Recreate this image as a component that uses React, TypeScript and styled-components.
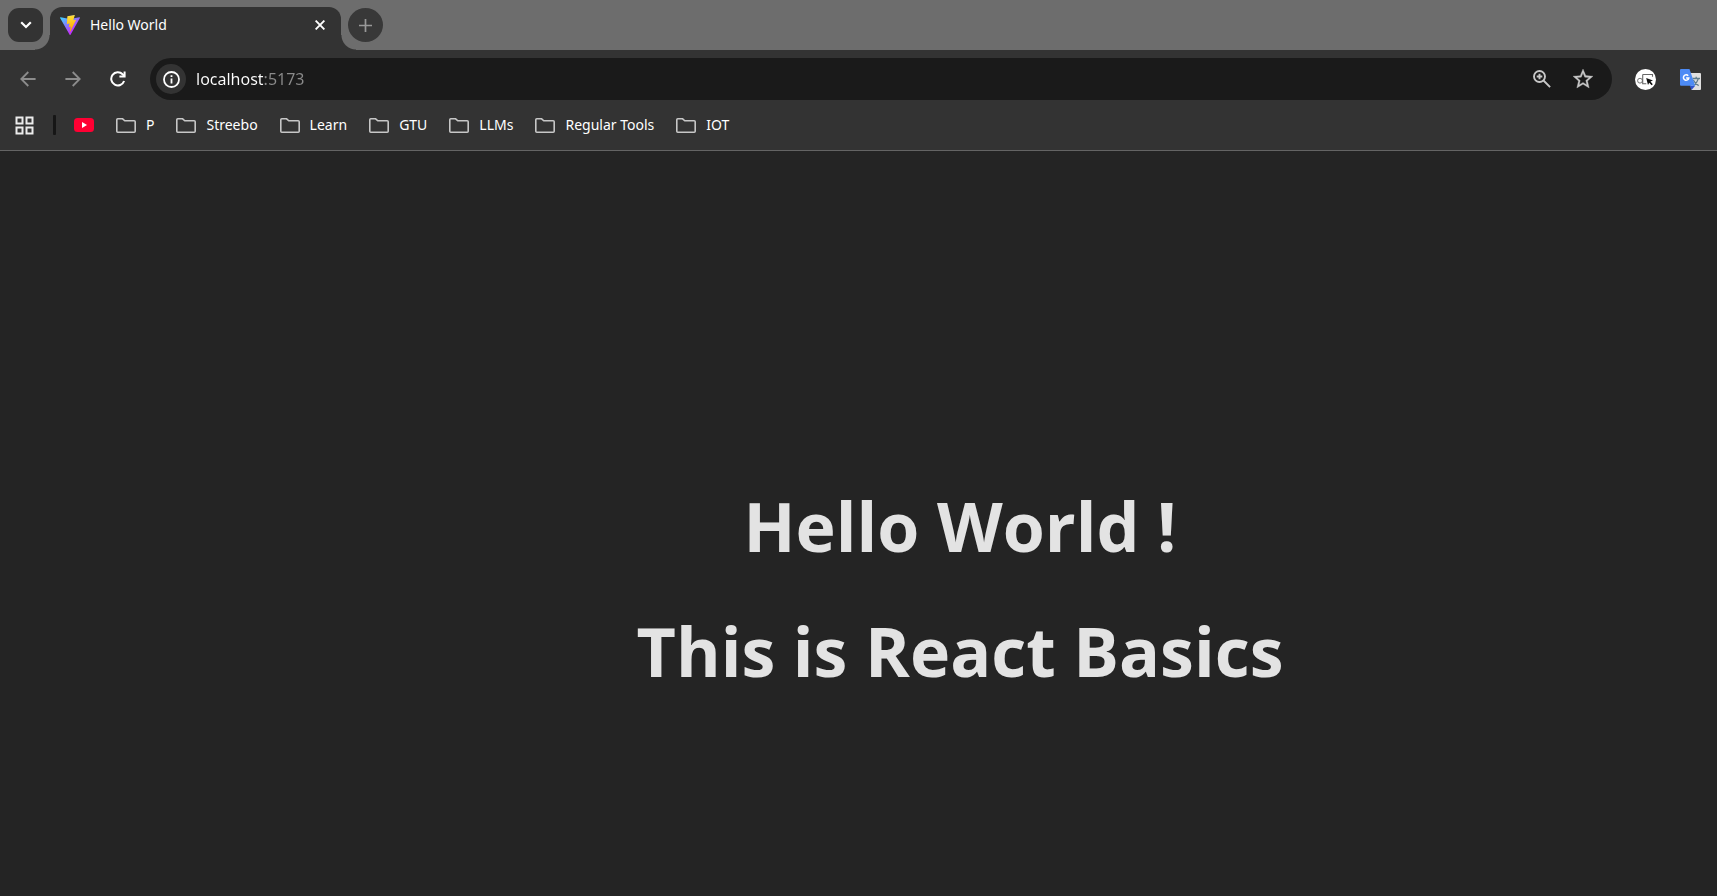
import React, { useState } from "react";
import styled, { createGlobalStyle } from "styled-components";

const uiFont = `"Segoe UI", "Noto Sans", "Open Sans", sans-serif`;

const GlobalStyle = createGlobalStyle`
  * { box-sizing: border-box; }
  body { margin: 0; background: #242424; font-family: ${uiFont}; }
  button { border: 0; padding: 0; background: none; color: inherit; font: inherit; cursor: pointer; }
  svg { display: block; flex: none; }
`;

const Browser = styled.div`
  display: flex;
  flex-direction: column;
  min-height: 100vh;
  background: #242424;
`;

const TabStrip = styled.div`
  display: flex;
  align-items: center;
  gap: 7px;
  height: 50px;
  padding: 0 8px;
  background: #6d6d6d;
`;

const StripButton = styled.button<{ $round?: boolean }>`
  display: grid;
  place-items: center;
  flex: none;
  width: 35px;
  height: 34px;
  border-radius: ${(p) => (p.$round ? "50%" : "11px")};
  background: ${(p) => (p.$round ? "#383838" : "#333333")};
`;

const Tab = styled.div`
  position: relative;
  display: flex;
  align-items: center;
  align-self: flex-end;
  gap: 10px;
  width: 291px;
  height: 43px;
  padding: 0 13px 7px 10px;
  border-radius: 12px 12px 0 0;
  background: #333333;
  color: #ffffff;
  font-size: 14px;
  line-height: 20px;

  &::before,
  &::after {
    content: "";
    position: absolute;
    bottom: 0;
    width: 15px;
    height: 15px;
  }
  &::before {
    right: 100%;
    background: radial-gradient(circle at 0 0, transparent 14px, #333333 15px);
  }
  &::after {
    left: 100%;
    background: radial-gradient(circle at 100% 0, transparent 14px, #333333 15px);
  }
`;

const TabTitle = styled.span`
  flex: 1;
`;

const CloseButton = styled.button`
  display: grid;
  place-items: center;
  width: 16px;
  height: 16px;
`;

const Toolbar = styled.div`
  display: flex;
  align-items: center;
  height: 58px;
  padding: 0 12px 0 13px;
  background: #333333;
`;

const NavButtons = styled.div`
  display: flex;
  gap: 16px;
  margin-right: 18px;
`;

const IconButton = styled.button`
  display: grid;
  place-items: center;
  flex: none;
  width: 29px;
  height: 30px;
`;

const AddressBar = styled.form`
  display: flex;
  flex: 1;
  align-items: center;
  height: 42px;
  padding: 0 15px 0 6px;
  border-radius: 21px;
  background: #1a1a1a;
`;

const SiteInfo = styled(IconButton)`
  width: 30px;
  border-radius: 50%;
  background: #333333;
`;

const AddressInput = styled.input`
  flex: 1;
  min-width: 0;
  height: 30px;
  margin-left: 10px;
  padding: 0;
  border: 0;
  outline: 0;
  background: linear-gradient(to right, #ffffff 67px, #8b8b8b 67px);
  background-clip: text;
  -webkit-background-clip: text;
  color: transparent;
  font-family: ${uiFont};
  font-size: 16px;
`;

const AddressActions = styled.div`
  display: flex;
  gap: 12px;
`;

const Extensions = styled.div`
  display: flex;
  gap: 16px;
  margin-left: 19px;
`;

const BookmarkBar = styled.nav`
  display: flex;
  align-items: center;
  height: 43px;
  padding: 0 15px 8px;
  border-bottom: 1px solid #646464;
  background: #333333;
  color: #ffffff;
  font-size: 14px;
  line-height: 20px;
`;

const AppsButton = styled.button`
  display: grid;
  place-items: center;
`;

const Separator = styled.span`
  width: 3px;
  height: 20px;
  margin: 0 18px 0 19px;
  border-radius: 1px;
  background: #161616;
`;

const Bookmarks = styled.div`
  display: flex;
  align-items: center;
  gap: 22px;
`;

const Bookmark = styled.a`
  display: flex;
  align-items: center;
  gap: 10px;
  color: inherit;
  text-decoration: none;
  white-space: nowrap;
`;

const Page = styled.main`
  display: flex;
  flex: 1;
  flex-direction: column;
  align-items: center;
  justify-content: center;
  gap: 45px;
  padding: 129px 0 0 203px;
`;

const Heading = styled.h1`
  margin: 0;
  color: #e3e3e3;
  font-family: "Segoe UI", "Open Sans", "Noto Sans", sans-serif;
  font-size: 68px;
  font-weight: 700;
  line-height: 80px;
`;

const ViteLogo = () => (
  <svg width="20" height="20" viewBox="0 0 256 257">
    <defs>
      <linearGradient id="vite-body" x1="-.8%" x2="57.6%" y1="7.7%" y2="78.4%">
        <stop offset="0%" stopColor="#41D1FF" />
        <stop offset="100%" stopColor="#BD34FE" />
      </linearGradient>
      <linearGradient id="vite-bolt" x1="43.4%" x2="50.3%" y1="2.2%" y2="89%">
        <stop offset="0%" stopColor="#FFEA83" />
        <stop offset="8.3%" stopColor="#FFDD35" />
        <stop offset="100%" stopColor="#FFA800" />
      </linearGradient>
    </defs>
    <path fill="url(#vite-body)" d="M255.153 37.938L134.897 252.976c-2.483 4.44-8.862 4.466-11.382.048L.875 37.958c-2.746-4.814 1.371-10.646 6.827-9.67l120.385 21.517a6.537 6.537 0 0 0 2.322-.004l117.867-21.483c5.438-.991 9.574 4.796 6.877 9.62Z" />
    <path fill="url(#vite-bolt)" d="M185.432.063L96.44 17.501a3.268 3.268 0 0 0-2.634 3.014l-5.474 92.456a3.268 3.268 0 0 0 3.997 3.378l24.777-5.718c2.318-.535 4.413 1.507 3.936 3.838l-7.361 36.047c-.495 2.426 1.782 4.5 4.151 3.78l15.304-4.649c2.372-.72 4.652 1.36 4.15 3.788l-11.698 56.621c-.732 3.542 3.979 5.473 5.943 2.437l1.313-2.028l72.516-144.72c1.215-2.423-.88-5.186-3.54-4.672l-25.505 4.922c-2.396.462-4.435-1.77-3.759-4.114l16.646-57.705c.677-2.35-1.37-4.583-3.769-4.113Z" />
  </svg>
);

const ChevronIcon = () => (
  <svg width="12" height="8" viewBox="0 0 12 8" fill="none" stroke="#fff" strokeWidth="2.2">
    <path d="M1.2 1.2 6 6l4.8-4.8" />
  </svg>
);

const CloseIcon = () => (
  <svg width="10" height="10" viewBox="0 0 10 10" stroke="#fff" strokeWidth="1.9">
    <path d="m.6.6 8.8 8.8M9.4.6.6 9.4" />
  </svg>
);

const PlusIcon = () => (
  <svg width="13" height="13" viewBox="0 0 13 13" stroke="#999" strokeWidth="1.7">
    <path d="M6.5 0v13M0 6.5h13" />
  </svg>
);

const ArrowIcon = ({ forward = false }: { forward?: boolean }) => (
  <svg width="16" height="16" viewBox="0 0 16 16" fill="none" stroke="#8c8c8c" strokeWidth="1.8">
    <path d={forward ? "M.4 8h14M7.7 1 14.7 8l-7 7" : "M15.6 8h-14M8.3 1 1.3 8l7 7"} />
  </svg>
);

const ReloadIcon = () => (
  <svg width="16" height="16" viewBox="0 0 16 16" fill="none" stroke="#fff" strokeWidth="2">
    <path d="M14.1 10A6.6 6.6 0 1 1 12.6 3.3L14.5 5.3" />
    <path d="M14.6.6v5H9.4" />
  </svg>
);

const InfoIcon = () => (
  <svg width="17" height="17" viewBox="0 0 17 17" fill="none" stroke="#fff" strokeWidth="1.8">
    <circle cx="8.5" cy="8.5" r="7.5" />
    <path d="M8.5 7.6v5M8.5 4.2v1.9" />
  </svg>
);

const ZoomIcon = () => (
  <svg width="18" height="18" viewBox="0 0 18 18" fill="none" stroke="#c7c7c7" strokeWidth="1.9">
    <circle cx="6.5" cy="6.5" r="5.5" />
    <path d="m10.5 10.5 6.6 6.6M6.5 3.7v5.6M3.7 6.5h5.6" />
  </svg>
);

const StarIcon = () => (
  <svg width="20" height="20" viewBox="2 2 20 20" fill="#c7c7c7" stroke="#c7c7c7" strokeWidth=".3">
    <path d="m22 9.24-7.19-.62L12 2 9.19 8.63 2 9.24l5.46 4.73L5.82 21 12 17.27 18.18 21l-1.63-7.03L22 9.24zM12 15.4l-3.76 2.27 1-4.28-3.32-2.88 4.38-.38L12 6.1l1.71 4.04 4.38.38-3.32 2.88 1 4.28L12 15.4z" />
  </svg>
);

const CaptureIcon = () => (
  <svg width="21" height="21" viewBox="0 0 21 21" fill="none">
    <circle cx="10.5" cy="10.5" r="10.5" fill="#fff" />
    <circle cx="5" cy="11.7" r="2.4" stroke="#777" strokeWidth="1" />
    <path d="M7.7 5.5v9.3h3.6M7.7 5.5h9.8v2.2" stroke="#666" strokeWidth="1.1" />
    <path d="m11.2 8.9 6.8 2.6-2.5 1.1 2.3 2.6-1.2 1.1-2.4-2.6-1.2 2.3z" fill="#111" />
  </svg>
);

const TranslateIcon = () => (
  <svg width="21" height="21" viewBox="0 0 21 21" fill="none">
    <path d="M8 4h12q1 0 1 1v15q0 1-1 1h-8.5z" fill="#e0e0e0" />
    <path d="M12.5 9.5H20M16.2 7.8v1.7M18.4 9.6c-.8 3-2.6 5-5 6.8M13.3 11c1.2 2.4 3 4.4 5.4 5.6" stroke="#607d8b" strokeWidth="1.3" />
    <path d="m9.8 16.8 5.4-.1-3.7 4.3z" fill="#2f51c9" />
    <path d="M1 0h8.5l5.7 16.8H1q-1 0-1-1V1q0-1 1-1z" fill="#4d8bf5" />
    <path d="M8.2 6.8A2.7 2.7 0 1 0 8.8 9H6.1" stroke="#fff" strokeWidth="1.5" />
  </svg>
);

const AppsIcon = () => (
  <svg width="19" height="19" viewBox="0 0 19 19" fill="none" stroke="#ececec" strokeWidth="2">
    <path d="M1.5 1.5h6v6h-6zM11.5 1.5h6v6h-6zM1.5 11.5h6v6h-6zM11.5 11.5h6v6h-6z" />
  </svg>
);

const YouTubeIcon = () => (
  <svg width="20" height="14" viewBox="0 0 20 14">
    <rect width="20" height="14" rx="3.5" fill="#ff0033" />
    <path d="m8 4 5 3-5 3z" fill="#fff" />
  </svg>
);

const FolderIcon = () => (
  <svg width="20" height="15" viewBox="0 0 20 15" fill="none" stroke="#c7c7c7" strokeWidth="1.6">
    <path d="M.8 1.8Q.8.8 1.8.8h4.8L8.8 2.8h9.4q1 0 1 1v9.4q0 1-1 1H1.8q-1 0-1-1z" />
  </svg>
);

const folders = ["P", "Streebo", "Learn", "GTU", "LLMs", "Regular Tools", "IOT"];

export default function App() {
  const [address, setAddress] = useState("localhost:5173");

  return (
    <Browser>
      <GlobalStyle />
      <header>
        <TabStrip>
          <StripButton aria-label="Search tabs"><ChevronIcon /></StripButton>
          <Tab>
            <ViteLogo />
            <TabTitle>Hello World</TabTitle>
            <CloseButton aria-label="Close tab"><CloseIcon /></CloseButton>
          </Tab>
          <StripButton $round aria-label="New tab"><PlusIcon /></StripButton>
        </TabStrip>
        <Toolbar>
          <NavButtons>
            <IconButton aria-label="Back"><ArrowIcon /></IconButton>
            <IconButton aria-label="Forward"><ArrowIcon forward /></IconButton>
            <IconButton aria-label="Reload"><ReloadIcon /></IconButton>
          </NavButtons>
          <AddressBar onSubmit={(e) => e.preventDefault()}>
            <SiteInfo type="button" aria-label="View site information"><InfoIcon /></SiteInfo>
            <AddressInput
              aria-label="Address"
              spellCheck={false}
              value={address}
              onChange={(e) => setAddress(e.target.value)}
            />
            <AddressActions>
              <IconButton type="button" aria-label="Zoom"><ZoomIcon /></IconButton>
              <IconButton type="button" aria-label="Bookmark this tab"><StarIcon /></IconButton>
            </AddressActions>
          </AddressBar>
          <Extensions>
            <IconButton aria-label="Capture"><CaptureIcon /></IconButton>
            <IconButton aria-label="Translate"><TranslateIcon /></IconButton>
          </Extensions>
        </Toolbar>
        <BookmarkBar aria-label="Bookmarks">
          <AppsButton aria-label="Apps"><AppsIcon /></AppsButton>
          <Separator />
          <Bookmarks>
            <Bookmark href="#youtube" aria-label="YouTube"><YouTubeIcon /></Bookmark>
            {folders.map((name) => (
              <Bookmark key={name} href="#folder">
                <FolderIcon />
                {name}
              </Bookmark>
            ))}
          </Bookmarks>
        </BookmarkBar>
      </header>
      <Page>
        <Heading>Hello World !</Heading>
        <Heading>This is React Basics</Heading>
      </Page>
    </Browser>
  );
}
